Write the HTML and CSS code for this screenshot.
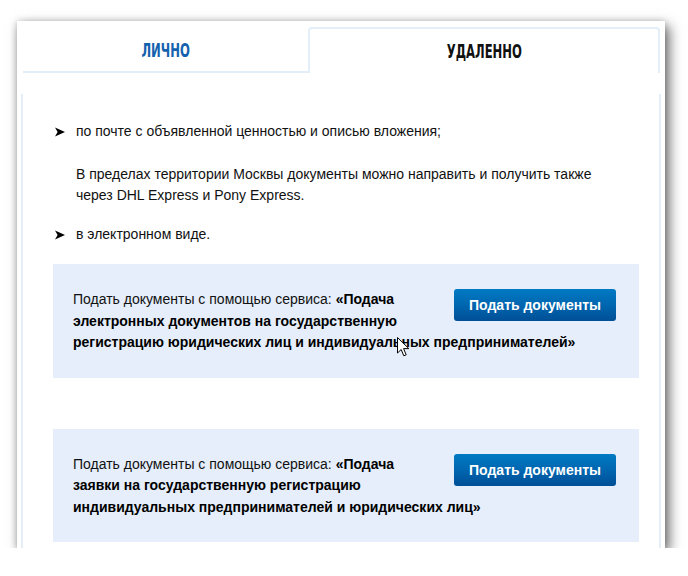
FILE: index.html
```html
<!DOCTYPE html>
<html lang="ru">
<head>
<meta charset="utf-8">
<title>Способы подачи</title>
<link rel="stylesheet" href="styles.css">
</head>
<body>
<div class="window">
  <div class="tabs">
    <div class="tab tab-inactive"><span class="tab-label">ЛИЧНО</span></div>
    <div class="tab tab-active"><span class="tab-label">УДАЛЕННО</span></div>
  </div>
  <div class="content">
    <div class="bullet-row">
      <svg class="bullet" viewBox="0 0 10 10" width="10" height="10"><polygon points="0,0.5 10,5 0,9.5 2.6,5" fill="#000"/></svg>
      <span>по почте с объявленной ценностью и описью вложения;</span>
    </div>
    <p class="note">В пределах территории Москвы документы можно направить и получить также через DHL Express и Pony Express.</p>
    <div class="bullet-row">
      <svg class="bullet" viewBox="0 0 10 10" width="10" height="10"><polygon points="0,0.5 10,5 0,9.5 2.6,5" fill="#000"/></svg>
      <span>в электронном виде.</span>
    </div>
    <div class="service-box">
      <a class="btn">Подать документы</a>
      <p class="service-text">Подать документы с помощью сервиса: <b>«Подача электронных документов на государственную регистрацию юридических лиц и индивидуальных предпринимателей»</b></p>
    </div>
    <div class="service-box second">
      <a class="btn">Подать документы</a>
      <p class="service-text">Подать документы с помощью сервиса: <b>«Подача заявки на государственную регистрацию индивидуальных предпринимателей и юридических лиц»</b></p>
    </div>
  </div>
  <svg class="cursor" viewBox="0 0 13 20" width="13" height="20"><path d="M0.5,0.5 L0.5,16 L4.2,12.5 L6.8,18.8 L9.2,17.8 L6.6,11.6 L11.8,11.6 Z" fill="#fff" stroke="#000" stroke-width="1"/></svg>
</div>
</body>
</html>
```

FILE: styles.css
```css
html, body {
  margin: 0;
  padding: 0;
  background: #ffffff;
}

body {
  font-family: "Liberation Sans", Arial, sans-serif;
  font-size: 14px;
  color: #111;
}

.window {
  position: relative;
  margin: 21px 0 0 17px;
  width: 648px;
  height: 527px;
  background: #fff;
  overflow: hidden;
  box-shadow: 4px 5px 12px rgba(0, 0, 0, 0.6), -1px 0 6px rgba(0, 0, 0, 0.15);
}

.tabs {
  display: flex;
  padding: 6px 5px 0 6px;
  height: 46px;
}

.tab {
  box-sizing: border-box;
  display: flex;
  align-items: center;
  justify-content: center;
  height: 46px;
}

.tab-inactive {
  width: 285px;
  border-bottom: 2px solid #e4eef8;
  padding-top: 2px;
}

.tab-active {
  width: 352px;
  border: 2px solid #e4eef8;
  border-bottom: none;
  border-radius: 4px 4px 0 0;
}

.tab-label {
  display: inline-block;
  font-family: "DejaVu Sans Condensed", "DejaVu Sans", sans-serif;
  font-stretch: condensed;
  font-weight: bold;
  font-size: 19px;
  transform: scaleX(0.68);
  letter-spacing: 0;
}

.tab-inactive .tab-label {
  color: #1462ae;
}

.tab-active .tab-label {
  color: #111;
  margin-top: -1px;
}

.content {
  margin: 21px 4px 0 4px;
  border-left: 2px solid #e4eef8;
  border-right: 2px solid #e4eef8;
  padding: 27px 20px 0 30px;
  height: 500px;
}

.bullet-row {
  display: flex;
  align-items: center;
  gap: 11px;
  line-height: 21px;
  padding-left: 2px;
}

.bullet {
  flex: none;
}

.note {
  margin: 22px 0 18px 23px;
  max-width: 535px;
  line-height: 21px;
}

.service-box {
  margin-top: 19px;
  background: #e5eefa;
  padding: 25px 23px 24px 20px;
  min-height: 64px;
}

.service-box.second {
  margin-top: 51px;
}

.service-text {
  margin: 0;
  line-height: 21.5px;
  color: #111;
}

.service-text b {
  color: #000;
}

.btn {
  float: right;
  margin: 0 0 0 32px;
  width: 162px;
  height: 32px;
  line-height: 32px;
  text-align: center;
  color: #fff;
  font-weight: bold;
  font-size: 14px;
  border-radius: 3px;
  background: linear-gradient(to bottom, #007ac3 0%, #0066b0 50%, #004f96 100%);
  cursor: pointer;
}

.cursor {
  position: absolute;
  left: 380px;
  top: 316px;
}
```
